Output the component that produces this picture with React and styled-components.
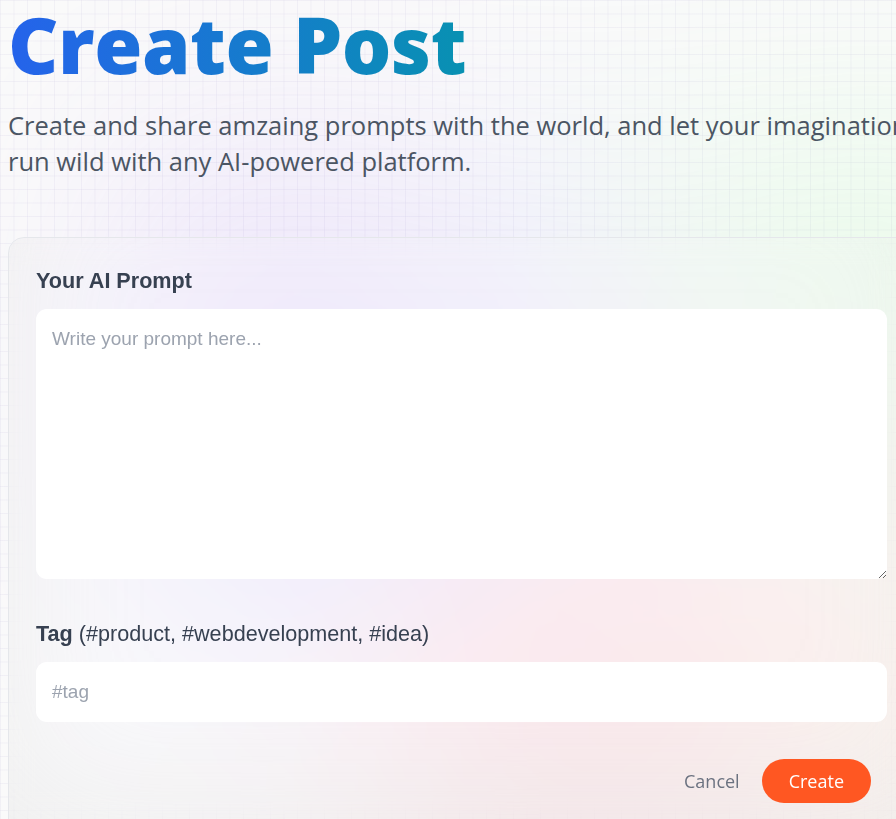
import styled, { createGlobalStyle } from "styled-components";

const GlobalStyle = createGlobalStyle`
  html, body {
    margin: 0;
    padding: 0;
    overflow: hidden;
    background: #fafafa;
  }
  * {
    box-sizing: border-box;
  }
`;

// Фон: сетка + размытые цветные пятна
const Page = styled.main`
  position: relative;
  min-height: 100vh;
  overflow: hidden;

  &::before {
    content: "";
    position: absolute;
    inset: 0;
    z-index: 0;
    background-image:
      linear-gradient(to right, rgba(222, 220, 234, 0.32) 1px, transparent 1px),
      linear-gradient(to bottom, rgba(222, 220, 234, 0.32) 1px, transparent 1px);
    background-size: 13.5px 13.5px;
  }
`;

const Glow = styled.div`
  position: absolute;
  z-index: 0;
  left: 120px;
  top: 110px;
  width: 900px;
  height: 760px;
  background-image:
    radial-gradient(at 97% 15%, hsla(125, 98%, 72%, 0.8) 0px, transparent 45%),
    radial-gradient(at 52% 99%, hsla(354, 98%, 61%, 1) 0px, transparent 50%),
    radial-gradient(at 10% 29%, hsla(256, 96%, 67%, 1) 0px, transparent 50%),
    radial-gradient(at 97% 96%, hsla(38, 60%, 74%, 1) 0px, transparent 50%),
    radial-gradient(at 33% 50%, hsla(222, 67%, 73%, 1) 0px, transparent 50%),
    radial-gradient(at 79% 53%, hsla(343, 68%, 79%, 1) 0px, transparent 50%);
  filter: blur(100px) saturate(150%);
  opacity: 0.14;
`;

const Section = styled.section`
  position: relative;
  z-index: 1;
  width: 915px;
  padding-left: 8px;
  display: flex;
  flex-direction: column;
`;

const Title = styled.h1`
  margin: 0;
  padding-top: 2px;
  font-family: "Open Sans", "Noto Sans", sans-serif;
  font-weight: 800;
  font-size: 78px;
  line-height: 90px;
  letter-spacing: -0.5px;
  background: linear-gradient(to right, #2563eb, #0891b2);
  -webkit-background-clip: text;
  background-clip: text;
  color: transparent;
  width: fit-content;
  margin-top: -3px;
`;

const Desc = styled.p`
  margin: 18px 0 0;
  max-width: 920px;
  font-family: "Open Sans", "Noto Sans", sans-serif;
  font-size: 25.5px;
  line-height: 36px;
  color: #4b5563;
`;

const Form = styled.form`
  margin-top: 58px;
  width: 907px;
  display: flex;
  flex-direction: column;
  gap: 37.8px;
  padding: 26px 27px 27px;
  border: 1px solid #e5e7eb;
  border-radius: 16px;
  background: rgba(255, 255, 255, 0.2);
  box-shadow: inset 13px -67px 127px 0 rgba(199, 199, 199, 0.2);
  backdrop-filter: blur(11px);
`;

const Field = styled.label`
  display: flex;
  flex-direction: column;
`;

const LabelText = styled.span`
  font-family: "Liberation Sans", Arial, sans-serif;
  font-weight: 700;
  font-size: 21.6px;
  line-height: 34.4px;
  color: #374151;
`;

const Hint = styled.span`
  font-weight: 400;
`;

const TextArea = styled.textarea`
  margin-top: 10.8px;
  width: 100%;
  height: 270px;
  padding: 16px;
  border: none;
  border-radius: 11px;
  background: #fff;
  font-family: "Liberation Sans", Arial, sans-serif;
  font-size: 19px;
  line-height: 27px;
  color: #6b7280;
  outline: none;
  resize: vertical;

  &::placeholder {
    color: #9ca3af;
  }
`;

const Input = styled.input`
  margin-top: 10.8px;
  width: 100%;
  height: 59.4px;
  padding: 16px;
  border: none;
  border-radius: 11px;
  background: #fff;
  font-family: "Liberation Sans", Arial, sans-serif;
  font-size: 19px;
  color: #6b7280;
  outline: none;

  &::placeholder {
    color: #9ca3af;
  }
`;

const Actions = styled.div`
  display: flex;
  justify-content: flex-end;
  align-items: center;
  gap: 22px;
  margin: 0 16px 27px;
`;

const CancelLink = styled.a`
  font-family: "Open Sans", "Noto Sans", sans-serif;
  font-size: 18px;
  color: #6b7280;
  text-decoration: none;
  cursor: pointer;
`;

const SubmitButton = styled.button`
  height: 43.2px;
  padding: 0 27px;
  border: none;
  border-radius: 999px;
  background: #ff5722;
  color: #fff;
  font-family: "Open Sans", "Noto Sans", sans-serif;
  font-size: 18px;
  cursor: pointer;
`;

export default function App() {
  return (
    <>
      <GlobalStyle />
      <Page>
        <Glow />
        <Section>
          <Title>Create Post</Title>
          <Desc>
            Create and share amzaing prompts with the world, and let your
            imagination run wild with any AI-powered platform.
          </Desc>
          <Form onSubmit={(e) => e.preventDefault()}>
            <Field>
              <LabelText>Your AI Prompt</LabelText>
              <TextArea placeholder="Write your prompt here..." />
            </Field>
            <Field>
              <LabelText>
                Tag <Hint>(#product, #webdevelopment, #idea)</Hint>
              </LabelText>
              <Input placeholder="#tag" />
            </Field>
            <Actions>
              <CancelLink>Cancel</CancelLink>
              <SubmitButton type="submit">Create</SubmitButton>
            </Actions>
          </Form>
        </Section>
      </Page>
    </>
  );
}
